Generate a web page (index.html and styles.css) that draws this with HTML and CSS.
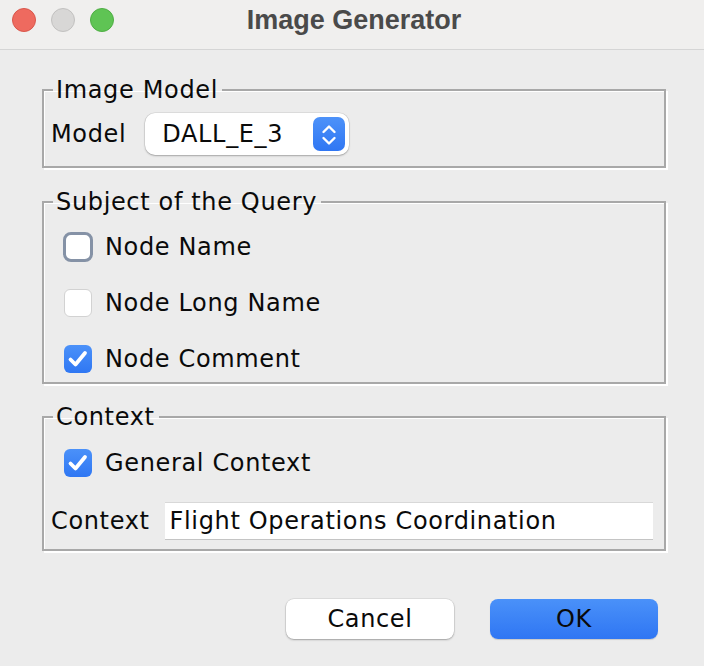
FILE: index.html
```html
<!DOCTYPE html>
<html>
<head>
<meta charset="utf-8">
<link rel="stylesheet" href="styles.css">
</head>
<body>
<div class="window">
  <div class="titlebar">
    <div class="lights">
      <span class="light red"></span>
      <span class="light gray"></span>
      <span class="light green"></span>
    </div>
    <div class="title">Image Generator</div>
  </div>
  <div class="content">
    <fieldset class="panel panel-model">
      <legend>Image Model</legend>
      <div class="row">
        <span class="label">Model</span>
        <div class="combo">
          <span class="combo-text">DALL_E_3</span>
          <span class="combo-btn">
            <svg width="32" height="30" viewBox="0 0 32 30">
              <path d="M10.5 13 L16 7.5 L21.5 13" fill="none" stroke="#fff" stroke-width="2.4" stroke-linecap="round" stroke-linejoin="round"/>
              <path d="M10.5 19 L16 24.5 L21.5 19" fill="none" stroke="#fff" stroke-width="2.4" stroke-linecap="round" stroke-linejoin="round"/>
            </svg>
          </span>
        </div>
      </div>
    </fieldset>

    <fieldset class="panel panel-subject">
      <legend>Subject of the Query</legend>
      <div class="checks">
        <label class="check"><span class="box box-focus"></span><span>Node Name</span></label>
        <label class="check"><span class="box"></span><span>Node Long Name</span></label>
        <label class="check"><span class="box box-on"><svg width="28" height="28" viewBox="0 0 28 28"><path d="M6.5 14.5 L11.5 19.5 L21 8" fill="none" stroke="#fff" stroke-width="3.8" stroke-linecap="round" stroke-linejoin="round"/></svg></span><span>Node Comment</span></label>
      </div>
    </fieldset>

    <fieldset class="panel panel-context">
      <legend>Context</legend>
      <label class="check"><span class="box box-on"><svg width="28" height="28" viewBox="0 0 28 28"><path d="M6.5 14.5 L11.5 19.5 L21 8" fill="none" stroke="#fff" stroke-width="3.8" stroke-linecap="round" stroke-linejoin="round"/></svg></span><span>General Context</span></label>
      <div class="row row-field">
        <span class="label">Context</span>
        <div class="field">Flight Operations Coordination</div>
      </div>
    </fieldset>

    <div class="buttons">
      <button class="btn">Cancel</button>
      <button class="btn btn-primary">OK</button>
    </div>
  </div>
</div>
</body>
</html>
```

FILE: styles.css
```css
html, body {
  margin: 0;
  padding: 0;
  background: #ececec;
}
body {
  width: 704px;
  height: 666px;
  overflow: hidden;
  font-family: "DejaVu Sans", "Liberation Sans", sans-serif;
  font-size: 24px;
  letter-spacing: 0.65px;
  color: #0a0a0a;
}
.titlebar {
  height: 49px;
  border-bottom: 1px solid #d5d5d5;
  background: #f0efee;
  display: flex;
  align-items: center;
  position: relative;
}
.lights {
  display: flex;
  gap: 15px;
  padding-left: 12px;
  margin-top: -10px;
}
.light {
  width: 24px;
  height: 24px;
  border-radius: 50%;
  box-sizing: border-box;
}
.red { background: #ee6a5f; border: 1px solid #d9564b; }
.gray { background: #d8d7d6; border: 1px solid #c2c1c0; }
.green { background: #5fc454; border: 1px solid #4fae44; }
.title {
  position: absolute;
  left: 4px;
  right: 0;
  top: 5px;
  text-align: center;
  font-family: "Liberation Sans", sans-serif;
  font-weight: bold;
  font-size: 27px;
  letter-spacing: 0;
  color: #4a4a4a;
}
.content {
  padding: 26px 38px 0 42px;
}
.panel {
  margin: 0;
  padding: 0 0 0 7px;
  border: 2px solid #a8a8a8;
  box-shadow: inset 1px 1px 0 #fff, 2px 2px 0 #fff;
  min-width: 0;
}
.panel legend {
  padding: 0 4px 0 3px;
  margin-left: 2px;
  line-height: 28px;
  font-size: 24px;
}
.row {
  display: flex;
  align-items: center;
}
.label {
  margin-right: 19px;
}
.panel-model .row {
  padding: 9px 0 11px 0;
}
.combo {
  width: 204px;
  height: 42px;
  background: #fff;
  border-radius: 10px;
  box-shadow: 0 0 0 0.5px rgba(0,0,0,0.12), 0 1px 2px rgba(0,0,0,0.25);
  display: flex;
  align-items: center;
  justify-content: space-between;
  box-sizing: border-box;
  padding: 0 4px 0 17px;
}
.combo-btn {
  width: 32px;
  height: 34px;
  border-radius: 7px;
  background: linear-gradient(#4d92f9, #2f76f3);
  display: flex;
  align-items: center;
  justify-content: center;
}
.panel-subject {
  margin-top: 20px;
}
.checks {
  display: flex;
  flex-direction: column;
  gap: 16px;
  padding: 11px 0 3px 0;
}
.check {
  display: flex;
  align-items: center;
  height: 40px;
  padding-left: 13px;
}
.box {
  width: 28px;
  height: 28px;
  box-sizing: border-box;
  border-radius: 6px;
  background: #fff;
  border: 1px solid #d2d2d2;
  margin-right: 13px;
  flex: none;
  display: flex;
}
.box-focus {
  width: 30px;
  height: 30px;
  margin-left: -1px;
  margin-right: 12px;
  border: 3px solid #8592a6;
  border-radius: 8px;
}
.box-on {
  background: linear-gradient(#4b91f9, #2f77f3);
  border: none;
}
.panel-context {
  margin-top: 19px;
}
.panel-context > .check {
  margin-top: 12px;
}
.row-field {
  padding: 19px 11px 9px 0;
}
.row-field .label {
  margin-right: 15px;
}
.field {
  flex: 1;
  height: 38px;
  background: #fff;
  box-sizing: border-box;
  border-top: 1px solid #d8d8d8;
  border-bottom: 1px solid #c4c4c4;
  display: flex;
  align-items: center;
  padding-left: 5px;
}
.buttons {
  display: flex;
  justify-content: flex-end;
  gap: 36px;
  padding: 48px 8px 0 0;
}
.btn {
  width: 168px;
  height: 40px;
  border: none;
  border-radius: 8px;
  background: #fff;
  font-family: "DejaVu Sans", "Liberation Sans", sans-serif;
  font-size: 24px;
  letter-spacing: 0.65px;
  color: #0a0a0a;
  box-shadow: 0 0 0 0.5px rgba(0,0,0,0.12), 0 1px 2px rgba(0,0,0,0.28);
  padding: 0;
}
.btn-primary {
  background: linear-gradient(#4a91f9, #2f76f3);
  box-shadow: 0 1px 1px rgba(0,0,0,0.15);
}
```
